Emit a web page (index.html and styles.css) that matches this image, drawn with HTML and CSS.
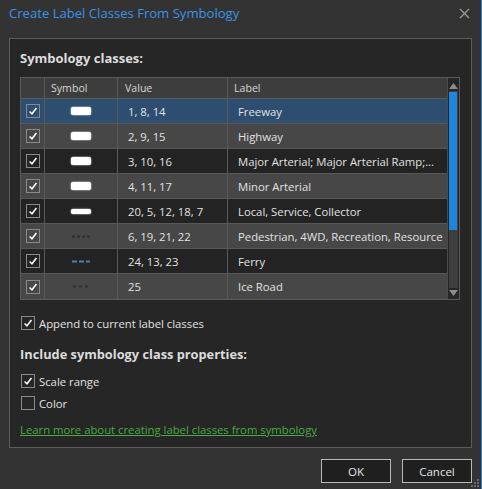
FILE: index.html
```html
<!DOCTYPE html>
<html>
<head>
<meta charset="utf-8">
<link rel="stylesheet" href="styles.css">
</head>
<body>
<div class="window">
  <div class="titlebar">
    <span class="title">Create Label Classes From Symbology</span>
    <svg class="close" width="11" height="11" viewBox="0 0 11 11"><path d="M1 1L10 10M10 1L1 10" stroke="#9a9a9a" stroke-width="1.3" fill="none"/></svg>
  </div>
  <div class="panel">
    <div class="heading">Symbology classes:</div>
    <div class="table">
      <div class="grid">
        <div class="row head">
          <div class="c c0"></div>
          <div class="c c1">Symbol</div>
          <div class="c c2">Value</div>
          <div class="c c3">Label</div>
        </div>
        <div class="row sel">
          <div class="c c0"><span class="cb on"><svg viewBox="0 0 14 14"><path d="M3 7.5L5.8 10.3L11 3.5" stroke="#fff" stroke-width="1.8" fill="none"/></svg></span></div>
          <div class="c c1"><span class="sym wide"></span></div>
          <div class="c c2">1, 8, 14</div>
          <div class="c c3">Freeway</div>
        </div>
        <div class="row lt">
          <div class="c c0"><span class="cb on"><svg viewBox="0 0 14 14"><path d="M3 7.5L5.8 10.3L11 3.5" stroke="#fff" stroke-width="1.8" fill="none"/></svg></span></div>
          <div class="c c1"><span class="sym wide"></span></div>
          <div class="c c2">2, 9, 15</div>
          <div class="c c3">Highway</div>
        </div>
        <div class="row dk">
          <div class="c c0"><span class="cb on"><svg viewBox="0 0 14 14"><path d="M3 7.5L5.8 10.3L11 3.5" stroke="#fff" stroke-width="1.8" fill="none"/></svg></span></div>
          <div class="c c1"><span class="sym wide"></span></div>
          <div class="c c2">3, 10, 16</div>
          <div class="c c3">Major Arterial; Major Arterial Ramp;...</div>
        </div>
        <div class="row lt">
          <div class="c c0"><span class="cb on"><svg viewBox="0 0 14 14"><path d="M3 7.5L5.8 10.3L11 3.5" stroke="#fff" stroke-width="1.8" fill="none"/></svg></span></div>
          <div class="c c1"><span class="sym wide"></span></div>
          <div class="c c2">4, 11, 17</div>
          <div class="c c3">Minor Arterial</div>
        </div>
        <div class="row dk">
          <div class="c c0"><span class="cb on"><svg viewBox="0 0 14 14"><path d="M3 7.5L5.8 10.3L11 3.5" stroke="#fff" stroke-width="1.8" fill="none"/></svg></span></div>
          <div class="c c1"><span class="sym thin"></span></div>
          <div class="c c2">20, 5, 12, 18, 7</div>
          <div class="c c3">Local, Service, Collector</div>
        </div>
        <div class="row lt">
          <div class="c c0"><span class="cb on"><svg viewBox="0 0 14 14"><path d="M3 7.5L5.8 10.3L11 3.5" stroke="#fff" stroke-width="1.8" fill="none"/></svg></span></div>
          <div class="c c1"><svg class="dash" width="18" height="3" viewBox="0 0 18 3"><path d="M0 1.5H18" stroke="#2e2e2e" stroke-width="2" stroke-dasharray="3 2"/></svg></div>
          <div class="c c2">6, 19, 21, 22</div>
          <div class="c c3">Pedestrian, 4WD, Recreation, Resource</div>
        </div>
        <div class="row dk">
          <div class="c c0"><span class="cb on"><svg viewBox="0 0 14 14"><path d="M3 7.5L5.8 10.3L11 3.5" stroke="#fff" stroke-width="1.8" fill="none"/></svg></span></div>
          <div class="c c1"><svg class="dash" width="18" height="3" viewBox="0 0 18 3"><path d="M0 1.5H18" stroke="#4d7fb0" stroke-width="2" stroke-dasharray="5 2"/></svg></div>
          <div class="c c2">24, 13, 23</div>
          <div class="c c3">Ferry</div>
        </div>
        <div class="row lt">
          <div class="c c0"><span class="cb on"><svg viewBox="0 0 14 14"><path d="M3 7.5L5.8 10.3L11 3.5" stroke="#fff" stroke-width="1.8" fill="none"/></svg></span></div>
          <div class="c c1"><svg class="dash" width="16" height="3" viewBox="0 0 16 3"><path d="M0 1.5H16" stroke="#303030" stroke-width="2" stroke-dasharray="3 3"/></svg></div>
          <div class="c c2">25</div>
          <div class="c c3">Ice Road</div>
        </div>
      </div>
      <div class="scrollbar">
        <svg class="arrow" width="9" height="6" viewBox="0 0 9 6"><path d="M4.5 0L9 6H0Z" fill="#8c8c8c"/></svg>
        <div class="track"><div class="thumb"></div></div>
        <svg class="arrow" width="9" height="6" viewBox="0 0 9 6"><path d="M0 0H9L4.5 6Z" fill="#8c8c8c"/></svg>
      </div>
    </div>
    <label class="opt first"><span class="cb on"><svg viewBox="0 0 14 14"><path d="M3 7.5L5.8 10.3L11 3.5" stroke="#fff" stroke-width="1.8" fill="none"/></svg></span>Append to current label classes</label>
    <div class="heading sub">Include symbology class properties:</div>
    <label class="opt"><span class="cb on"><svg viewBox="0 0 14 14"><path d="M3 7.5L5.8 10.3L11 3.5" stroke="#fff" stroke-width="1.8" fill="none"/></svg></span>Scale range</label>
    <label class="opt"><span class="cb"></span>Color</label>
    <a class="link" href="#">Learn more about creating label classes from symbology</a>
  </div>
  <div class="buttons">
    <button class="btn">OK</button>
    <button class="btn">Cancel</button>
  </div>
  <svg class="grip" width="9" height="9" viewBox="0 0 9 9"><g fill="#6a6a6a"><rect x="6" y="0" width="2" height="2"/><rect x="3" y="3" width="2" height="2"/><rect x="6" y="3" width="2" height="2"/><rect x="0" y="6" width="2" height="2"/><rect x="3" y="6" width="2" height="2"/><rect x="6" y="6" width="2" height="2"/></g></svg>
</div>
</body>
</html>
```

FILE: styles.css
```css
html, body {
  margin: 0;
  padding: 0;
  background: #333333;
}
body {
  font-family: "Open Sans", "Noto Sans", sans-serif;
  font-size: 11.3px;
  color: #e2e2e2;
}
.window {
  position: relative;
  width: 481px;
  height: 489px;
  border-right: 1px solid #2f7fd6;
  background: #333333;
  overflow: hidden;
}
.titlebar {
  height: 38px;
  display: flex;
  align-items: flex-start;
  justify-content: space-between;
}
.title {
  margin: 3px 0 0 9px;
  font-size: 13.1px;
  color: #3b94e8;
  line-height: 20px;
}
.close {
  margin: 8px 11px 0 0;
}
.panel {
  margin: 0 9px;
  height: 410px;
  border: 1px solid #5c5c5c;
  background: #262626;
  padding: 0 11px 0 10px;
  box-sizing: border-box;
  display: flex;
  flex-direction: column;
}
.heading {
  font-weight: bold;
  font-size: 13px;
  color: #dcdcdc;
  margin-top: 10px;
  line-height: 18px;
  height: 18px;
}
.heading.sub {
  margin-top: 15px;
  font-size: 12.8px;
}
.table {
  margin-top: 10px;
  display: flex;
  border: 1px solid #5a5a5a;
  height: 223px;
  box-sizing: border-box;
}
.grid {
  flex: 1;
  display: flex;
  flex-direction: column;
}
.row {
  display: grid;
  grid-template-columns: 23px 73px 110px 1fr;
  height: 25px;
  border-bottom: 1px solid #575757;
  box-sizing: border-box;
}
.row.head {
  height: 21px;
  background: #3d3d3d;
  border-bottom: 1px solid #5a5a5a;
  font-size: 10.6px;
  color: #d8d8d8;
}
.row.sel { background: #2d4e70; }
.row.lt { background: #474747; }
.row.dk { background: #232323; }
.row:last-child { border-bottom: none; }
.c {
  display: flex;
  align-items: center;
  border-left: 1px solid #595959;
  padding-left: 10px;
  white-space: nowrap;
  overflow: hidden;
}
.c0 {
  border-left: none;
  padding-left: 5px;
}
.c1 {
  justify-content: center;
  padding-left: 0;
  padding-right: 0;
}
.row.head .c1 {
  justify-content: flex-start;
  padding-left: 6px;
}
.row.head .c2 { padding-left: 7px; }
.row.head .c3 { padding-left: 6px; }
.cb {
  width: 14px;
  height: 14px;
  box-sizing: border-box;
  border: 1px solid #8a8a8a;
  display: inline-flex;
  align-items: center;
  justify-content: center;
  flex: none;
}
.cb svg {
  width: 12px;
  height: 12px;
}
.sym {
  display: block;
  width: 20px;
  background: #ffffff;
  border-radius: 2px;
  box-shadow: 0 0 1px 0.5px rgba(255,255,255,0.5);
}
.sym.wide { height: 8px; }
.sym.thin { height: 5px; }
.dash { display: block; }
.scrollbar {
  width: 12px;
  background: #262626;
  border-left: 1px solid #4a4a4a;
  display: flex;
  flex-direction: column;
  align-items: center;
  padding: 5px 0 3px;
  box-sizing: border-box;
}
.track {
  flex: 1;
  width: 9px;
  background: #3e3e3e;
  margin: 2px 0;
}
.thumb {
  margin-top: 1px;
  height: 138px;
  width: 8px;
  background: #1f86e0;
}
.opt {
  display: flex;
  align-items: center;
  gap: 4px;
  height: 14px;
  margin-top: 8px;
  color: #e2e2e2;
  padding-left: 1px;
}
.opt.first { margin-top: 16px; }
.heading.sub + .opt { margin-top: 11px; }
.link {
  margin-top: 12px;
  color: #4aaa45;
  text-decoration: underline;
  line-height: 16px;
  align-self: flex-start;
}
.buttons {
  display: flex;
  justify-content: flex-end;
  gap: 11px;
  margin: 11px 9px 0 0;
}
.btn {
  width: 70px;
  height: 24px;
  background: #1f1f1f;
  border: 1px solid #b9b9b9;
  color: #e6e6e6;
  font-family: "Open Sans", "Noto Sans", sans-serif;
  font-size: 11.5px;
  padding: 0;
}
.grip {
  position: absolute;
  right: 1px;
  bottom: 1px;
}
```
